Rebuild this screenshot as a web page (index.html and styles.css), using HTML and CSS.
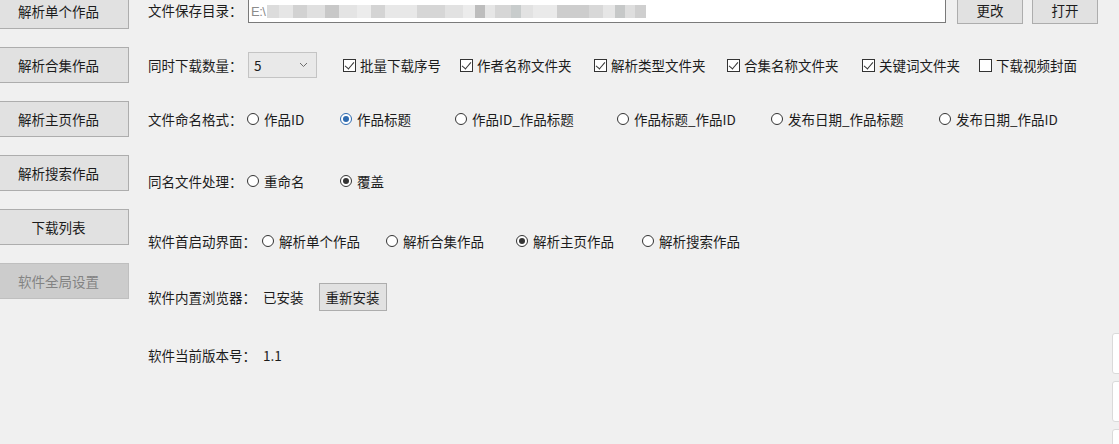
FILE: index.html
```html
<!DOCTYPE html>
<html lang="zh-CN">
<head>
    <meta charset="UTF-8">
    <meta name="viewport" content="width=device-width, initial-scale=1.0">
    <title>软件全局设置</title>
    <link rel="stylesheet" href="styles.css">
</head>
<body>
    <div class="app">
        <aside class="nav">
            <button class="nav-btn">解析单个作品</button>
            <button class="nav-btn">解析合集作品</button>
            <button class="nav-btn">解析主页作品</button>
            <button class="nav-btn">解析搜索作品</button>
            <button class="nav-btn">下载列表</button>
            <button class="nav-btn" disabled>软件全局设置</button>
        </aside>

        <main class="settings">
            <div class="row row-path">
                <span class="label">文件保存目录：</span>
                <div class="path-box">
                    <span class="path-text">E:\</span>
                    <span class="path-blur"></span>
                </div>
                <button class="btn btn-wide">更改</button>
                <button class="btn btn-wide">打开</button>
            </div>

            <div class="row">
                <span class="label">同时下载数量：</span>
                <div class="select">
                    <span>5</span>
                    <svg width="9" height="6" viewBox="0 0 9 6"><path d="M1 1 L4.5 4.5 L8 1" fill="none" stroke="#6d6d6d" stroke-width="1"/></svg>
                </div>
                <div class="checks">
                    <label class="opt"><span class="box checked"></span>批量下载序号</label>
                    <label class="opt"><span class="box checked"></span>作者名称文件夹</label>
                    <label class="opt"><span class="box checked"></span>解析类型文件夹</label>
                    <label class="opt"><span class="box checked"></span>合集名称文件夹</label>
                    <label class="opt"><span class="box checked"></span>关键词文件夹</label>
                    <label class="opt"><span class="box"></span>下载视频封面</label>
                </div>
            </div>

            <div class="row">
                <span class="label">文件命名格式：</span>
                <div class="radios radios-name">
                    <label class="opt"><span class="dot"></span>作品ID</label>
                    <label class="opt"><span class="dot on focus"></span>作品标题</label>
                    <label class="opt"><span class="dot"></span>作品ID_作品标题</label>
                    <label class="opt"><span class="dot"></span>作品标题_作品ID</label>
                    <label class="opt"><span class="dot"></span>发布日期_作品标题</label>
                    <label class="opt"><span class="dot"></span>发布日期_作品ID</label>
                </div>
            </div>

            <div class="row">
                <span class="label">同名文件处理：</span>
                <div class="radios radios-name">
                    <label class="opt"><span class="dot"></span>重命名</label>
                    <label class="opt"><span class="dot on"></span>覆盖</label>
                </div>
            </div>

            <div class="row">
                <span class="label label-wide">软件首启动界面：</span>
                <div class="radios radios-start">
                    <label class="opt"><span class="dot"></span>解析单个作品</label>
                    <label class="opt"><span class="dot"></span>解析合集作品</label>
                    <label class="opt"><span class="dot on"></span>解析主页作品</label>
                    <label class="opt"><span class="dot"></span>解析搜索作品</label>
                </div>
            </div>

            <div class="row">
                <span class="label label-wide">软件内置浏览器：</span>
                <span class="value">已安装</span>
                <button class="btn btn-small">重新安装</button>
            </div>

            <div class="row">
                <span class="label label-wide">软件当前版本号：</span>
                <span class="value">1.1</span>
            </div>
        </main>
    </div>

    <div class="edge">
        <span></span>
        <span></span>
        <span></span>
    </div>
</body>
</html>
```

FILE: styles.css
```css
html, body {
    margin: 0;
    height: 100%;
    overflow: hidden;
}
body {
    font-family: "Noto Sans CJK SC", "Noto Sans", sans-serif;
    font-size: 13.5px;
    line-height: 18px;
    color: #1c1c1c;
    background-color: #f0f0f0;
    position: relative;
}
button {
    font-family: inherit;
    font-size: inherit;
    line-height: 18px;
    color: #1c1c1c;
    padding: 0;
}
.app {
    display: flex;
    align-items: flex-start;
}
.nav {
    width: 129px;
    flex-shrink: 0;
    display: flex;
    flex-direction: column;
    gap: 18px;
    margin-top: -7px;
}
.nav-btn {
    width: 141px;
    height: 36px;
    margin-left: -12px;
    background-color: #e1e1e1;
    border: 1px solid #adadad;
}
.nav-btn:disabled {
    background-color: #cccccc;
    border-color: #bfbfbf;
    color: #838383;
}
.settings {
    margin-left: 19px;
    flex: 1;
}
.row {
    display: flex;
    align-items: center;
    height: 28px;
}
.row:nth-child(1) { margin-top: -4px; }
.row:nth-child(2) { margin-top: 27px; }
.row:nth-child(3) { margin-top: 26px; }
.row:nth-child(4) { margin-top: 34px; }
.row:nth-child(5) { margin-top: 32px; }
.row:nth-child(6) { margin-top: 28px; }
.row:nth-child(7) { margin-top: 30px; }
.label {
    width: 100px;
    flex-shrink: 0;
    white-space: nowrap;
}
.label-wide {
    width: 115px;
}
.path-box {
    width: 698px;
    height: 27px;
    align-self: flex-start;
    background-color: #fff;
    border: 1px solid #7a7a7a;
    display: flex;
    align-items: center;
    padding-left: 2px;
    padding-top: 4px;
    box-sizing: border-box;
}
.path-text {
    color: #8c8c8c;
    font-family: "Liberation Sans", sans-serif;
    font-size: 13px;
    letter-spacing: -0.5px;
}
.path-blur {
    width: 379px;
    height: 13px;
    margin-left: 2px;
    background: linear-gradient(90deg,
        #dcdcdc 0 12px, #e6e6e6 12px 26px, #d2d2d2 26px 40px, #e0e0e0 40px 58px,
        #c8c8c8 58px 72px, #e4e4e4 72px 90px, #ececec 90px 104px, #d4d4d4 104px 118px,
        #e8e8e8 118px 150px, #d6d6d6 150px 178px, #e2e2e2 178px 196px, #ececec 196px 208px,
        #bdbdbd 208px 218px, #e6e6e6 218px 228px, #d6d6d6 228px 244px, #c8cccc 244px 254px,
        #e2e2e2 254px 266px, #eaeaea 266px 290px, #cdcdcd 290px 322px, #d8d8d8 322px 336px,
        #e6e6e6 336px 348px, #c6c8c8 348px 358px, #dedede 358px 368px, #cfcfcf 368px 379px);
}
.btn {
    height: 28px;
    background-color: #e1e1e1;
    border: 1px solid #adadad;
}
.btn-wide {
    width: 66px;
    align-self: flex-start;
}
.path-box + .btn-wide {
    margin-left: 11px;
}
.btn-wide + .btn-wide {
    margin-left: 9px;
}
.btn-small {
    width: 68px;
    margin-left: 15px;
}
.select {
    width: 69px;
    height: 26px;
    box-sizing: border-box;
    background-color: #e9e9e9;
    border: 1px solid #c4c4c4;
    display: flex;
    align-items: center;
    justify-content: space-between;
    padding: 0 8px 0 5px;
}
.checks {
    display: grid;
    grid-template-columns: 117px 134px 133px 135px 117px auto;
    margin-left: 26px;
}
.opt {
    display: flex;
    align-items: center;
    white-space: nowrap;
}
.box {
    width: 13px;
    height: 13px;
    box-sizing: border-box;
    border: 1px solid #333;
    background-color: #fff;
    margin-right: 4px;
    position: relative;
}
.box.checked::after {
    content: "";
    position: absolute;
    left: 3px;
    top: 0px;
    width: 4px;
    height: 8px;
    border: solid #333;
    border-width: 0 1px 1px 0;
    transform: rotate(40deg);
}
.radios {
    display: grid;
    margin-left: -1px;
}
.radios-name {
    grid-template-columns: 93px 115px 162px 154px 168px auto;
}
.radios-start {
    grid-template-columns: 124px 130px 126px auto;
}
.dot {
    width: 12px;
    height: 12px;
    box-sizing: border-box;
    border: 1px solid #333;
    border-radius: 50%;
    background-color: #fff;
    margin-right: 5px;
    position: relative;
}
.dot.on::after {
    content: "";
    position: absolute;
    left: 2px;
    top: 2px;
    width: 6px;
    height: 6px;
    border-radius: 50%;
    background-color: #333;
}
.dot.focus {
    border-color: #2f6bb0;
}
.dot.focus::after {
    background-color: #2f6bb0;
}
.value {
    white-space: nowrap;
}
.edge {
    position: absolute;
    right: -5px;
    top: 333px;
    height: 111px;
    overflow: hidden;
    display: flex;
    flex-direction: column;
    gap: 7px;
}
.edge span {
    flex-shrink: 0;
    width: 10px;
    height: 39px;
    background-color: #fff;
    border: 1px solid #dadada;
    border-radius: 3px;
}
```
